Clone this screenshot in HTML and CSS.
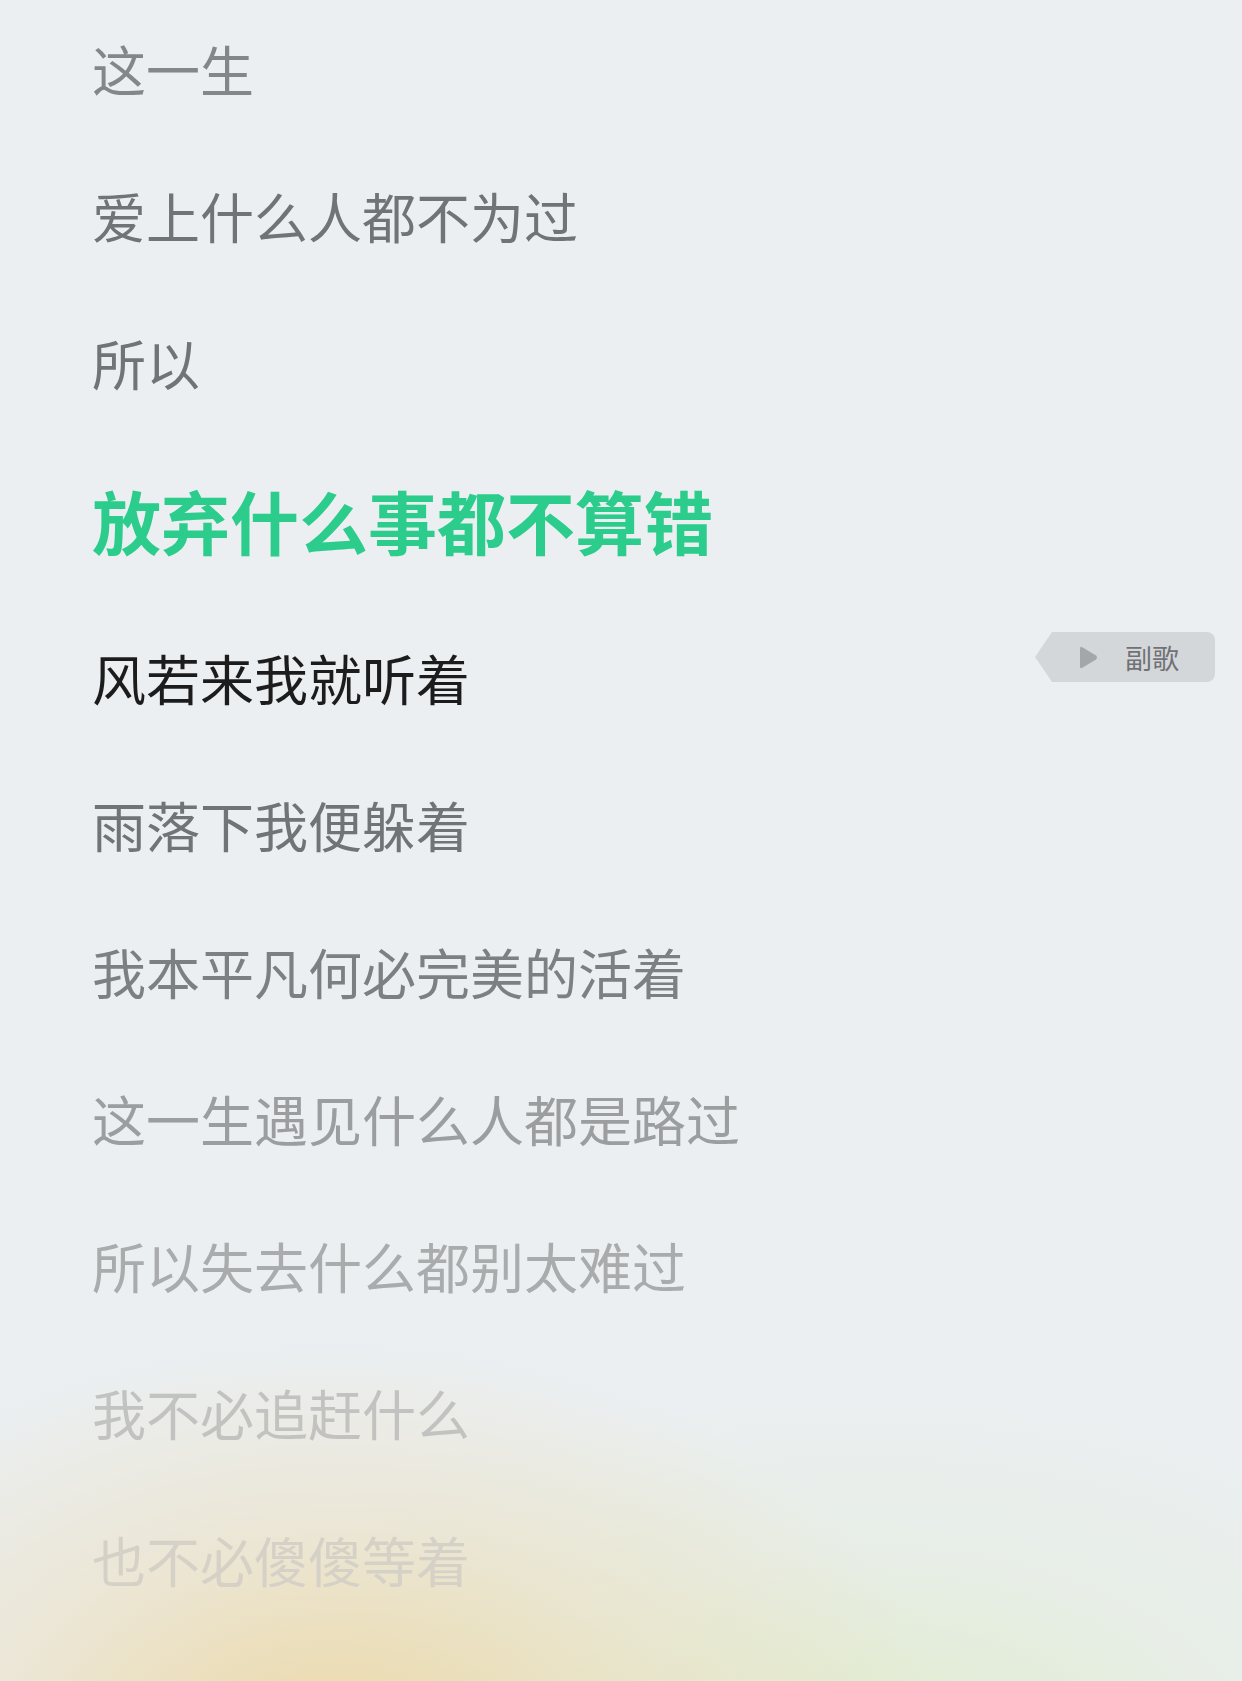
FILE: index.html
```html
<!DOCTYPE html>
<html lang="zh-CN">
<head>
    <meta charset="UTF-8">
    <meta name="viewport" content="width=device-width, initial-scale=1.0">
    <title>歌词</title>
    <link rel="stylesheet" href="styles.css">
</head>
<body>
    <div class="lyrics">
        <div class="line past-top">这一生</div>
        <div class="line past">爱上什么人都不为过</div>
        <div class="line past">所以</div>
        <div class="line current">放弃什么事都不算错</div>
        <div class="line next">
            <span>风若来我就听着</span>
            <span class="tag">
                <svg class="tag-play" width="20" height="25" viewBox="0 0 20 25">
                    <path d="M2 3.5 Q2 1 4.3 2.3 L18 10.6 Q20 12.5 18 14.4 L4.3 22.7 Q2 24 2 21.5 Z" fill="#a4a6a8"/>
                </svg>
                <span class="tag-text">副歌</span>
            </span>
        </div>
        <div class="line soon">雨落下我便躲着</div>
        <div class="line fade-1">我本平凡何必完美的活着</div>
        <div class="line fade-2">这一生遇见什么人都是路过</div>
        <div class="line fade-3">所以失去什么都别太难过</div>
        <div class="line fade-4">我不必追赶什么</div>
        <div class="line fade-5">也不必傻傻等着</div>
    </div>
</body>
</html>
```

FILE: styles.css
```css
html, body {
    margin: 0;
    padding: 0;
}
body {
    width: 1242px;
    height: 1681px;
    overflow: hidden;
    font-family: "Noto Sans CJK SC", "Noto Sans", sans-serif;
    background-color: #ebeff2;
    background-image:
        radial-gradient(ellipse 620px 420px at 330px 1760px, rgba(236, 214, 160, 0.95), rgba(236, 220, 180, 0.45) 55%, rgba(235, 239, 242, 0) 100%),
        radial-gradient(ellipse 700px 380px at 860px 1760px, rgba(222, 236, 200, 0.9), rgba(226, 236, 214, 0.4) 55%, rgba(235, 239, 242, 0) 100%);
}
.lyrics {
    display: flex;
    flex-direction: column;
    gap: 66px;
    padding: 28px 0 0 92px;
}
.line {
    font-size: 54px;
    line-height: 81px;
    height: 81px;
    color: #76797c;
    white-space: nowrap;
}
.past-top {
    color: #84878a;
}
.past {
    color: #717477;
}
.current {
    font-size: 69px;
    line-height: 102px;
    height: 102px;
    font-weight: bold;
    color: #2ccd8c;
}
.next {
    display: flex;
    align-items: flex-start;
    justify-content: space-between;
    color: #1c1c1c;
}
.soon {
    color: #717477;
}
.fade-1 {
    color: #7d8083;
}
.fade-2 {
    color: #9b9d9f;
}
.fade-3 {
    color: #a9abac;
}
.fade-4 {
    color: #c2c2c0;
}
.fade-5 {
    color: #d5d1c7;
}
.tag {
    display: flex;
    align-items: center;
    height: 50px;
    width: 163px;
    margin: -5px 27px 0 0;
    padding-left: 26px;
    box-sizing: border-box;
    background: #d4d7da;
    border-radius: 0 8px 8px 0;
    position: relative;
    line-height: 1;
}
.tag::before {
    content: "";
    position: absolute;
    left: -17px;
    top: 0;
    border-style: solid;
    border-width: 25px 17px 25px 0;
    border-color: transparent #d4d7da transparent transparent;
}
.tag-text {
    font-size: 27px;
    color: #707275;
    margin-left: 27px;
}
```
